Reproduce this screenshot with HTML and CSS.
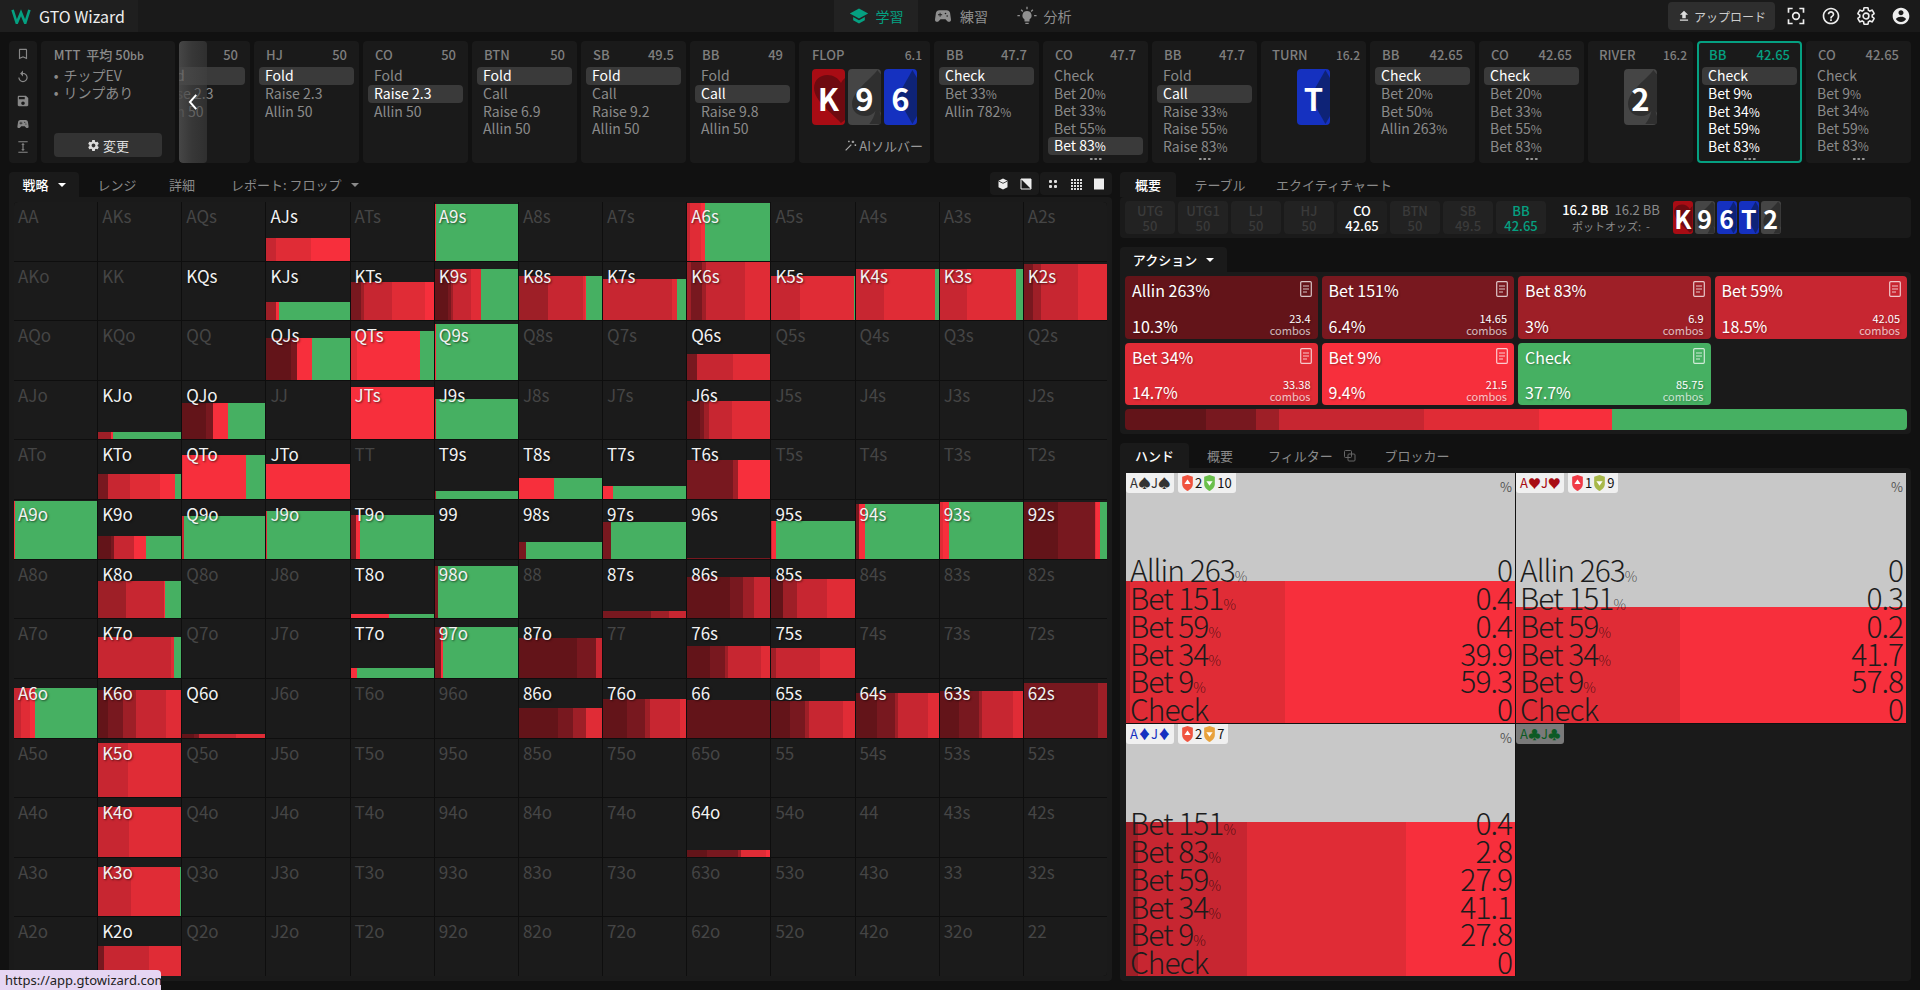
FILE: index.html
```html
<!DOCTYPE html>
<html lang="ja">
<head>
<meta charset="utf-8">
<title>GTO Wizard</title>
<link rel="stylesheet" href="styles.css">
</head>
<body>
<svg class="sprite" aria-hidden="true">
  <symbol id="heart" viewBox="0 0 33 56" preserveAspectRatio="none"><path d="M28.5 54C20 44 2 32 2 19 2 11 8 6 15 6c6 0 11 3 13.500 8C31 9 36 6 42 6l18 24z"/></symbol>
  <symbol id="spade" viewBox="0 0 33 56" preserveAspectRatio="none"><path d="M29 1C23 10 4 22 4 35c0 8 6 12 13 12 4 0 8-2 10-5-1 5-3 9-6 13h16c-3-4-5-8-6-13 2 3 6 5 10 5l19-7V25C50 18 35 10 29 1z"/></symbol>
  <symbol id="diamond" viewBox="0 0 33 56" preserveAspectRatio="none"><path d="M28 1l15 27-15 27-15-27z"/></symbol>
  <symbol id="doc" viewBox="0 0 12 16"><rect x=".7" y=".7" width="10.600" height="14.600" rx="1" fill="none" stroke="currentColor" stroke-width="1.200"/><path d="M3 5h6M3 8h6M3 11h4" stroke="currentColor" stroke-width="1.200"/></symbol>
  <symbol id="sup" viewBox="0 0 12 18"><path fill="currentColor" d="M6 0l6 2v8c0 4-3 6-6 8-3-2-6-4-6-8V2z"/><path fill="#fff" d="M6 5l3.500 5h-7z"/></symbol>
  <symbol id="sdown" viewBox="0 0 12 18"><path fill="currentColor" d="M6 0l6 2v8c0 4-3 6-6 8-3-2-6-4-6-8V2z"/><path fill="#fff" d="M6 12L2.500 7h7z"/></symbol>
</svg>

<header class="top">
  <div class="logo">
    <svg class="logo-w" viewBox="0 0 20 16"><path d="M1 1l4.500 14L10 4l4.500 11L19 1" fill="none" stroke="#05a081" stroke-width="2.800"/></svg>
    <span>GTO Wizard</span>
  </div>
  <nav class="nav">
    <a class="nav-i act"><svg viewBox="0 0 24 24"><path d="M12 3L1 9l11 6 11-6zM5 13.200v4L12 21l7-3.800v-4L12 17z"/></svg>学習</a>
    <a class="nav-i"><svg viewBox="0 0 24 24"><path d="M21.580 16.090l-1.090-7.660C20.210 6.460 18.520 5 16.530 5H7.470C5.480 5 3.790 6.460 3.510 8.430l-1.090 7.660C2.200 17.630 3.390 19 4.940 19c.68 0 1.320-.27 1.800-.75L9 16h6l2.250 2.250c.48.48 1.130.75 1.800.75 1.560 0 2.750-1.370 2.530-2.910zM11 11H9v2H8v-2H6v-1h2V8h1v2h2v1zm4-1c-.55 0-1-.45-1-1s.45-1 1-1 1 .45 1 1-.45 1-1 1zm2 3c-.55 0-1-.45-1-1s.45-1 1-1 1 .45 1 1-.45 1-1 1z"/></svg>練習</a>
    <a class="nav-i"><svg viewBox="0 0 24 24"><path d="M10 21.500h4v-1.500h-4zM12 6a5.500 5.500 0 0 0-3 10.100V18.500h6v-2.400A5.500 5.500 0 0 0 12 6z"/><path d="M12 1v3M3.500 11.500h-3M23.500 11.500h-3M5 4.500l2 2M19 4.500l-2 2" stroke="currentColor" stroke-width="1.600"/></svg>分析</a>
  </nav>
  <div class="top-r">
    <button class="upload"><svg viewBox="0 0 24 24"><path d="M5 20h14v-2H5v2zm0-10h4v6h6v-6h4l-7-7-7 7z"/></svg>アップロード</button>
    <svg class="ti" viewBox="0 0 24 24" fill="none" stroke="#eee" stroke-width="2"><path d="M3 8V3h5M16 3h5v5M21 16v5h-5M8 21H3v-5"/><circle cx="12" cy="12" r="4"/></svg>
    <svg class="ti" viewBox="0 0 24 24"><path fill="#eee" d="M11 18h2v-2h-2v2zm1-16C6.480 2 2 6.480 2 12s4.480 10 10 10 10-4.480 10-10S17.520 2 12 2zm0 18c-4.410 0-8-3.590-8-8s3.590-8 8-8 8 3.590 8 8-3.590 8-8 8zm0-14c-2.210 0-4 1.790-4 4h2c0-1.100.9-2 2-2s2 .9 2 2c0 2-3 1.750-3 5h2c0-2.250 3-2.500 3-5 0-2.210-1.790-4-4-4z"/></svg>
    <svg class="ti" viewBox="0 0 24 24"><path fill="none" stroke="#eee" stroke-width="1.900" d="M19.430 12.980c.04-.32.07-.64.07-.98s-.03-.66-.07-.98l2.110-1.650c.19-.15.24-.42.12-.64l-2-3.460c-.12-.22-.39-.3-.61-.22l-2.490 1c-.52-.4-1.080-.73-1.690-.98l-.38-2.650C14.460 2.180 14.250 2 14 2h-4c-.25 0-.46.18-.49.42l-.38 2.650c-.61.25-1.170.59-1.690.98l-2.490-1c-.23-.09-.49 0-.61.22l-2 3.460c-.13.22-.07.49.12.64l2.110 1.650c-.04.32-.07.65-.07.98s.03.66.07.98l-2.110 1.650c-.19.15-.24.42-.12.64l2 3.460c.12.22.39.3.61.22l2.490-1c.52.4 1.080.73 1.690.98l.38 2.650c.03.24.24.42.49.42h4c.25 0 .46-.18.49-.42l.38-2.650c.61-.25 1.170-.59 1.690-.98l2.490 1c.23.09.49 0 .61-.22l2-3.460c.12-.22.07-.49-.12-.64l-2.110-1.650zM12 15.500c-1.930 0-3.500-1.570-3.500-3.500s1.570-3.500 3.500-3.500 3.500 1.570 3.500 3.500-1.570 3.500-3.500 3.500z"/></svg>
    <svg class="ti" viewBox="0 0 24 24"><path fill="#eee" d="M12 2C6.480 2 2 6.480 2 12s4.480 10 10 10 10-4.480 10-10S17.520 2 12 2zm0 3c1.660 0 3 1.340 3 3s-1.340 3-3 3-3-1.340-3-3 1.340-3 3-3zm0 14.200c-2.500 0-4.710-1.280-6-3.220.03-1.990 4-3.080 6-3.080 1.990 0 5.970 1.090 6 3.080-1.290 1.940-3.500 3.220-6 3.220z"/></svg>
  </div>
</header>

<section class="strip">
  <div class="tools">
    <svg viewBox="0 0 24 24"><path d="M17 3H7c-1.100 0-2 .9-2 2v16l7-3 7 3V5c0-1.100-.9-2-2-2zm0 15l-5-2.180L7 18V5h10v13z"/></svg>
    <svg viewBox="0 0 24 24"><path d="M12 5V1L7 6l5 5V7c3.310 0 6 2.690 6 6s-2.690 6-6 6-6-2.690-6-6H4c0 4.420 3.580 8 8 8s8-3.580 8-8-3.580-8-8-8z"/></svg>
    <svg viewBox="0 0 24 24"><path d="M17 3H5c-1.110 0-2 .9-2 2v14c0 1.100.89 2 2 2h14c1.100 0 2-.9 2-2V7l-4-4zm-5 16c-1.660 0-3-1.340-3-3s1.340-3 3-3 3 1.340 3 3-1.340 3-3 3zm3-10H5V5h10v4z"/></svg>
    <svg viewBox="0 0 24 24"><path d="M21.580 16.090l-1.090-7.660C20.210 6.460 18.520 5 16.530 5H7.470C5.480 5 3.790 6.460 3.510 8.430l-1.090 7.660C2.200 17.630 3.390 19 4.940 19c.68 0 1.320-.27 1.800-.75L9 16h6l2.250 2.250c.48.48 1.130.75 1.800.75 1.560 0 2.750-1.370 2.530-2.910zM11 11H9v2H8v-2H6v-1h2V8h1v2h2v1zm4-1c-.55 0-1-.45-1-1s.45-1 1-1 1 .45 1 1-.45 1-1 1zm2 3c-.55 0-1-.45-1-1s.45-1 1-1 1 .45 1 1-.45 1-1 1z"/></svg>
    <svg viewBox="0 0 24 24"><path d="M4 2h16v2H4zM4 20h16v2H4zM12 5L9 8h2v8H9l3 3 3-3h-2V8h2z"/></svg>
  </div>
  <div class="mtt">
    <div class="mtt-h">MTT&nbsp; 平均 50<small>bb</small></div>
    <ul class="mtt-l"><li>チップEV</li><li>リンプあり</li></ul>
    <button class="chg"><svg viewBox="0 0 24 24"><path d="M19.430 12.980c.04-.32.07-.64.07-.98s-.03-.66-.07-.98l2.110-1.650c.19-.15.24-.42.12-.64l-2-3.460c-.12-.22-.39-.3-.61-.22l-2.490 1c-.52-.4-1.080-.73-1.690-.98l-.38-2.650C14.460 2.180 14.250 2 14 2h-4c-.25 0-.46.18-.49.42l-.38 2.650c-.61.25-1.170.59-1.690.98l-2.490-1c-.23-.09-.49 0-.61.22l-2 3.460c-.13.22-.07.49.12.64l2.110 1.650c-.04.32-.07.65-.07.98s.03.66.07.98l-2.110 1.650c-.19.15-.24.42-.12.64l2 3.460c.12.22.39.3.61.22l2.490-1c.52.4 1.080.73 1.690.98l.38 2.650c.03.24.24.42.49.42h4c.25 0 .46-.18.49-.42l.38-2.650c.61-.25 1.170-.59 1.690-.98l2.490 1c.23.09.49 0 .61-.22l2-3.460c.12-.22.07-.49-.12-.64l-2.110-1.650zM12 15.500c-1.930 0-3.500-1.570-3.500-3.500s1.570-3.500 3.500-3.500 3.500 1.570 3.500 3.500-1.570 3.500-3.500 3.500z"/></svg>変更</button>
  </div>
  <div class="node clip">
    <div class="clip-in">
      <div class="nh"><span>LJ</span><span>50</span></div>
      <div class="opt on">Fold</div><div class="opt">Raise 2.3</div><div class="opt">Allin 50</div>
    </div>
    <div class="scroller"><svg viewBox="0 0 12 20"><path d="M9 2L2 10l7 8" fill="none" stroke="#fff" stroke-width="2.200"/></svg></div>
  </div>
  <div class="node"><div class="nh"><span>HJ</span><span>50</span></div><div class="opt on">Fold</div><div class="opt">Raise 2.3</div><div class="opt">Allin 50</div></div>
  <div class="node"><div class="nh"><span>CO</span><span>50</span></div><div class="opt">Fold</div><div class="opt on">Raise 2.3</div><div class="opt">Allin 50</div></div>
  <div class="node"><div class="nh"><span>BTN</span><span>50</span></div><div class="opt on">Fold</div><div class="opt">Call</div><div class="opt">Raise 6.9</div><div class="opt">Allin 50</div></div>
  <div class="node"><div class="nh"><span>SB</span><span>49.5</span></div><div class="opt on">Fold</div><div class="opt">Call</div><div class="opt">Raise 9.2</div><div class="opt">Allin 50</div></div>
  <div class="node"><div class="nh"><span>BB</span><span>49</span></div><div class="opt">Fold</div><div class="opt on">Call</div><div class="opt">Raise 9.8</div><div class="opt">Allin 50</div></div>
  <div class="node street flop">
    <div class="nh"><span>FLOP</span><span class="pot">6.1</span></div>
    <div class="cards">
      <div class="card red"><svg><use href="#heart"/></svg><span>K</span></div>
      <div class="card gray"><svg><use href="#spade"/></svg><span>9</span></div>
      <div class="card blue"><svg><use href="#diamond"/></svg><span>6</span></div>
    </div>
    <div class="ai"><svg viewBox="0 0 16 16" fill="none" stroke="#aaa" stroke-width="1.500"><path d="M2 14L9 7M11 2v3M9.500 3.500h3M14 6.500v2M13 7.500h2M6 2v2M5 3h2"/></svg>AIソルバー</div>
  </div>
  <div class="node"><div class="nh"><span>BB</span><span>47.7</span></div><div class="opt on">Check</div><div class="opt">Bet 33<small>%</small></div><div class="opt">Allin 782<small>%</small></div></div>
  <div class="node"><div class="nh"><span>CO</span><span>47.7</span></div><div class="opt">Check</div><div class="opt">Bet 20<small>%</small></div><div class="opt">Bet 33<small>%</small></div><div class="opt">Bet 55<small>%</small></div><div class="opt on">Bet 83<small>%</small></div><div class="more"></div></div>
  <div class="node"><div class="nh"><span>BB</span><span>47.7</span></div><div class="opt">Fold</div><div class="opt on">Call</div><div class="opt">Raise 33<small>%</small></div><div class="opt">Raise 55<small>%</small></div><div class="opt">Raise 83<small>%</small></div><div class="more"></div></div>
  <div class="node street">
    <div class="nh"><span>TURN</span><span class="pot">16.2</span></div>
    <div class="cards"><div class="card blue"><svg><use href="#diamond"/></svg><span>T</span></div></div>
  </div>
  <div class="node"><div class="nh"><span>BB</span><span>42.65</span></div><div class="opt on">Check</div><div class="opt">Bet 20<small>%</small></div><div class="opt">Bet 50<small>%</small></div><div class="opt">Allin 263<small>%</small></div></div>
  <div class="node"><div class="nh"><span>CO</span><span>42.65</span></div><div class="opt on">Check</div><div class="opt">Bet 20<small>%</small></div><div class="opt">Bet 33<small>%</small></div><div class="opt">Bet 55<small>%</small></div><div class="opt">Bet 83<small>%</small></div><div class="more"></div></div>
  <div class="node street">
    <div class="nh"><span>RIVER</span><span class="pot">16.2</span></div>
    <div class="cards"><div class="card gray"><svg><use href="#spade"/></svg><span>2</span></div></div>
  </div>
  <div class="node cur"><div class="nh"><span>BB</span><span>42.65</span></div><div class="opt on">Check</div><div class="opt">Bet 9<small>%</small></div><div class="opt">Bet 34<small>%</small></div><div class="opt">Bet 59<small>%</small></div><div class="opt">Bet 83<small>%</small></div><div class="more"></div></div>
  <div class="node"><div class="nh"><span>CO</span><span>42.65</span></div><div class="opt">Check</div><div class="opt">Bet 9<small>%</small></div><div class="opt">Bet 34<small>%</small></div><div class="opt">Bet 59<small>%</small></div><div class="opt">Bet 83<small>%</small></div><div class="more"></div></div>
</section>

<main class="main">
  <section class="left">
    <div class="tabs">
      <a class="tab act w-strat">戦略<em class="caret"></em></a>
      <a class="tab w-range">レンジ</a>
      <a class="tab w-detail">詳細</a>
      <a class="tab w-report">レポート: フロップ<em class="caret"></em></a>
      <div class="gtools">
        <div class="gt"><svg viewBox="0 0 12 12"><path d="M6 .5l4.500 2.300v6.400L6 11.500 1.500 9.200V2.800z" fill="#eee"/><path d="M1.500 3L6 5.300 10.500 3" stroke="#1a1a1a" fill="none" stroke-width=".8"/></svg><svg viewBox="0 0 12 12"><path d="M1 1h10v10H1z" fill="#1a1a1a" stroke="#eee"/><path d="M1 1h10v10z" fill="#eee"/></svg></div>
        <div class="gt"><svg viewBox="0 0 12 12" fill="#ddd"><rect x="2" y="2" width="3" height="3" rx="1"/><rect x="7" y="2" width="3" height="3" rx="1"/><rect x="2" y="7" width="3" height="3" rx="1"/><rect x="7" y="7" width="3" height="3" rx="1"/></svg><svg viewBox="0 0 12 12" fill="#ddd"><path d="M1 1h2v2H1zM4 1h2v2H4zM7 1h2v2H7zM10 1h2v2h-2zM1 4h2v2H1zM4 4h2v2H4zM7 4h2v2H7zM10 4h2v2h-2zM1 7h2v2H1zM4 7h2v2H4zM7 7h2v2H7zM10 7h2v2h-2zM1 10h2v2H1zM4 10h2v2H4zM7 10h2v2H7zM10 10h2v2h-2z"/></svg><svg viewBox="0 0 12 12"><path d="M1 .5h10v11H1z" fill="#eee"/></svg></div>
      </div>
    </div>
    <div class="panel grid-wrap">
      <div class="grid">
        <div class="cl"><span>AA</span></div><div class="cl"><span>AKs</span></div><div class="cl"><span>AQs</span></div>
        <div class="cl on"><span>AJs</span><div class="bar" style="height:23px"><i class="d" style="flex:12"></i><i class="e" style="flex:41"></i><i class="f" style="flex:47"></i></div></div>
        <div class="cl"><span>ATs</span></div>
        <div class="cl on"><span>A9s</span><div class="bar" style="height:57px"><i class="f" style="flex:1"></i><i class="g" style="flex:99"></i></div></div>
        <div class="cl"><span>A8s</span></div><div class="cl"><span>A7s</span></div>
        <div class="cl on"><span>A6s</span><div class="bar" style="height:58px"><i class="d" style="flex:3"></i><i class="e" style="flex:13"></i><i class="f" style="flex:5"></i><i class="g" style="flex:79"></i></div></div>
        <div class="cl"><span>A5s</span></div><div class="cl"><span>A4s</span></div><div class="cl"><span>A3s</span></div><div class="cl"><span>A2s</span></div>

        <div class="cl"><span>AKo</span></div><div class="cl"><span>KK</span></div><div class="cl on"><span>KQs</span></div>
        <div class="cl on"><span>KJs</span><div class="bar" style="height:18px"><i class="c" style="flex:11"></i><i class="f" style="flex:4"></i><i class="g" style="flex:85"></i></div></div>
        <div class="cl on"><span>KTs</span><div class="bar" style="height:38px"><i class="b" style="flex:13"></i><i class="c" style="flex:3"></i><i class="d" style="flex:34"></i><i class="e" style="flex:39"></i><i class="f" style="flex:11"></i></div></div>
        <div class="cl on"><span>K9s</span><div class="bar" style="height:51px"><i class="a" style="flex:16"></i><i class="b" style="flex:4"></i><i class="c" style="flex:2"></i><i class="d" style="flex:22"></i><i class="e" style="flex:12"></i><i class="g" style="flex:44"></i></div></div>
        <div class="cl on"><span>K8s</span><div class="bar" style="height:44px"><i class="c" style="flex:35"></i><i class="d" style="flex:42"></i><i class="e" style="flex:2"></i><i class="f" style="flex:2"></i><i class="g" style="flex:19"></i></div></div>
        <div class="cl on"><span>K7s</span><div class="bar" style="height:41px"><i class="d" style="flex:83"></i><i class="e" style="flex:6"></i><i class="g" style="flex:11"></i></div></div>
        <div class="cl on"><span>K6s</span><div class="bar" style="height:58px"><i class="c" style="flex:4"></i><i class="b" style="flex:14"></i><i class="c" style="flex:5"></i><i class="d" style="flex:46"></i><i class="e" style="flex:31"></i></div></div>
        <div class="cl on"><span>K5s</span><div class="bar" style="height:44px"><i class="d" style="flex:35"></i><i class="e" style="flex:64"></i><i class="g" style="flex:1"></i></div></div>
        <div class="cl on"><span>K4s</span><div class="bar" style="height:51px"><i class="d" style="flex:34"></i><i class="e" style="flex:62"></i><i class="g" style="flex:4"></i></div></div>
        <div class="cl on"><span>K3s</span><div class="bar" style="height:51px"><i class="d" style="flex:33"></i><i class="e" style="flex:59"></i><i class="g" style="flex:8"></i></div></div>
        <div class="cl on"><span>K2s</span><div class="bar" style="height:56px"><i class="b" style="flex:11"></i><i class="c" style="flex:10"></i><i class="d" style="flex:44"></i><i class="e" style="flex:35"></i></div></div>

        <div class="cl"><span>AQo</span></div><div class="cl"><span>KQo</span></div><div class="cl"><span>QQ</span></div>
        <div class="cl on"><span>QJs</span><div class="bar" style="height:42px"><i class="a" style="flex:29"></i><i class="b" style="flex:8"></i><i class="f" style="flex:18"></i><i class="g" style="flex:45"></i></div></div>
        <div class="cl on"><span>QTs</span><div class="bar" style="height:49px"><i class="e" style="flex:8"></i><i class="f" style="flex:75"></i><i class="g" style="flex:17"></i></div></div>
        <div class="cl on"><span>Q9s</span><div class="bar" style="height:56px"><i class="f" style="flex:1"></i><i class="g" style="flex:99"></i></div></div>
        <div class="cl"><span>Q8s</span></div><div class="cl"><span>Q7s</span></div>
        <div class="cl on"><span>Q6s</span><div class="bar" style="height:26px"><i class="b" style="flex:12"></i><i class="d" style="flex:43"></i><i class="e" style="flex:44"></i><i class="g" style="flex:1"></i></div></div>
        <div class="cl"><span>Q5s</span></div><div class="cl"><span>Q4s</span></div><div class="cl"><span>Q3s</span></div><div class="cl"><span>Q2s</span></div>

        <div class="cl"><span>AJo</span></div>
        <div class="cl on"><span>KJo</span><div class="bar" style="height:7px"><i class="c" style="flex:15"></i><i class="f" style="flex:3"></i><i class="g" style="flex:82"></i></div></div>
        <div class="cl on"><span>QJo</span><div class="bar" style="height:36px"><i class="a" style="flex:28"></i><i class="b" style="flex:9"></i><i class="f" style="flex:18"></i><i class="g" style="flex:45"></i></div></div>
        <div class="cl"><span>JJ</span></div>
        <div class="cl on"><span>JTs</span><div class="bar" style="height:52px"><i class="f" style="flex:1"></i></div></div>
        <div class="cl on"><span>J9s</span><div class="bar" style="height:40px"><i class="d" style="flex:1"></i><i class="g" style="flex:99"></i></div></div>
        <div class="cl"><span>J8s</span></div><div class="cl"><span>J7s</span></div>
        <div class="cl on"><span>J6s</span><div class="bar" style="height:38px"><i class="a" style="flex:15"></i><i class="b" style="flex:5"></i><i class="c" style="flex:6"></i><i class="d" style="flex:28"></i><i class="e" style="flex:45"></i><i class="g" style="flex:1"></i></div></div>
        <div class="cl"><span>J5s</span></div><div class="cl"><span>J4s</span></div><div class="cl"><span>J3s</span></div><div class="cl"><span>J2s</span></div>

        <div class="cl"><span>ATo</span></div>
        <div class="cl on"><span>KTo</span><div class="bar" style="height:25px"><i class="b" style="flex:12"></i><i class="d" style="flex:26"></i><i class="e" style="flex:36"></i><i class="f" style="flex:18"></i><i class="g" style="flex:8"></i></div></div>
        <div class="cl on"><span>QTo</span><div class="bar" style="height:44px"><i class="e" style="flex:1"></i><i class="f" style="flex:76"></i><i class="g" style="flex:23"></i></div></div>
        <div class="cl on"><span>JTo</span><div class="bar" style="height:35px"><i class="f" style="flex:1"></i></div></div>
        <div class="cl"><span>TT</span></div>
        <div class="cl on"><span>T9s</span><div class="bar" style="height:8px"><i class="c" style="flex:2"></i><i class="g" style="flex:98"></i></div></div>
        <div class="cl on"><span>T8s</span><div class="bar" style="height:21px"><i class="f" style="flex:42"></i><i class="g" style="flex:58"></i></div></div>
        <div class="cl on"><span>T7s</span><div class="bar" style="height:13px"><i class="f" style="flex:12"></i><i class="g" style="flex:88"></i></div></div>
        <div class="cl on"><span>T6s</span><div class="bar" style="height:39px"><i class="b" style="flex:55"></i><i class="c" style="flex:6"></i><i class="f" style="flex:39"></i></div></div>
        <div class="cl"><span>T5s</span></div><div class="cl"><span>T4s</span></div><div class="cl"><span>T3s</span></div><div class="cl"><span>T2s</span></div>

        <div class="cl on"><span>A9o</span><div class="bar" style="height:58px"><i class="f" style="flex:1"></i><i class="g" style="flex:99"></i></div></div>
        <div class="cl on"><span>K9o</span><div class="bar" style="height:23px"><i class="a" style="flex:15"></i><i class="b" style="flex:4"></i><i class="d" style="flex:24"></i><i class="f" style="flex:14"></i><i class="g" style="flex:43"></i></div></div>
        <div class="cl on"><span>Q9o</span><div class="bar" style="height:43px"><i class="d" style="flex:2"></i><i class="g" style="flex:98"></i></div></div>
        <div class="cl on"><span>J9o</span><div class="bar" style="height:48px"><i class="e" style="flex:1"></i><i class="g" style="flex:99"></i></div></div>
        <div class="cl on"><span>T9o</span><div class="bar" style="height:44px"><i class="b" style="flex:6"></i><i class="f" style="flex:5"></i><i class="g" style="flex:89"></i></div></div>
        <div class="cl on"><span>99</span></div>
        <div class="cl on"><span>98s</span><div class="bar" style="height:17px"><i class="b" style="flex:8"></i><i class="g" style="flex:92"></i></div></div>
        <div class="cl on"><span>97s</span><div class="bar" style="height:37px"><i class="b" style="flex:9"></i><i class="f" style="flex:1"></i><i class="g" style="flex:90"></i></div></div>
        <div class="cl on"><span>96s</span><div class="bar" style="height:1px"><i class="b" style="flex:1"></i></div></div>
        <div class="cl on"><span>95s</span><div class="bar" style="height:38px"><i class="d" style="flex:1"></i><i class="f" style="flex:4"></i><i class="g" style="flex:95"></i></div></div>
        <div class="cl on"><span>94s</span><div class="bar" style="height:55px"><i class="b" style="flex:4"></i><i class="f" style="flex:7"></i><i class="g" style="flex:89"></i></div></div>
        <div class="cl on"><span>93s</span><div class="bar" style="height:57px"><i class="e" style="flex:4"></i><i class="f" style="flex:7"></i><i class="g" style="flex:89"></i></div></div>
        <div class="cl on"><span>92s</span><div class="bar" style="height:57px"><i class="a" style="flex:41"></i><i class="b" style="flex:45"></i><i class="e" style="flex:1"></i><i class="f" style="flex:4"></i><i class="g" style="flex:9"></i></div></div>

        <div class="cl"><span>A8o</span></div>
        <div class="cl on"><span>K8o</span><div class="bar" style="height:37px"><i class="c" style="flex:34"></i><i class="d" style="flex:45"></i><i class="f" style="flex:1"></i><i class="g" style="flex:20"></i></div></div>
        <div class="cl"><span>Q8o</span></div><div class="cl"><span>J8o</span></div>
        <div class="cl on"><span>T8o</span><div class="bar" style="height:4px"><i class="f" style="flex:46"></i><i class="g" style="flex:54"></i></div></div>
        <div class="cl on"><span>98o</span><div class="bar" style="height:52px"><i class="b" style="flex:4"></i><i class="g" style="flex:96"></i></div></div>
        <div class="cl"><span>88</span></div>
        <div class="cl on"><span>87s</span><div class="bar" style="height:7px"><i class="b" style="flex:58"></i><i class="c" style="flex:21"></i><i class="d" style="flex:21"></i></div></div>
        <div class="cl on"><span>86s</span><div class="bar" style="height:41px"><i class="a" style="flex:51"></i><i class="b" style="flex:16"></i><i class="c" style="flex:13"></i><i class="d" style="flex:20"></i></div></div>
        <div class="cl on"><span>85s</span><div class="bar" style="height:39px"><i class="a" style="flex:14"></i><i class="c" style="flex:17"></i><i class="d" style="flex:36"></i><i class="e" style="flex:33"></i></div></div>
        <div class="cl"><span>84s</span></div><div class="cl"><span>83s</span></div><div class="cl"><span>82s</span></div>

        <div class="cl"><span>A7o</span></div>
        <div class="cl on"><span>K7o</span><div class="bar" style="height:41px"><i class="d" style="flex:88"></i><i class="e" style="flex:3"></i><i class="g" style="flex:9"></i></div></div>
        <div class="cl"><span>Q7o</span></div><div class="cl"><span>J7o</span></div>
        <div class="cl on"><span>T7o</span><div class="bar" style="height:10px"><i class="f" style="flex:8"></i><i class="g" style="flex:92"></i></div></div>
        <div class="cl on"><span>97o</span><div class="bar" style="height:51px"><i class="b" style="flex:8"></i><i class="f" style="flex:2"></i><i class="g" style="flex:90"></i></div></div>
        <div class="cl on"><span>87o</span><div class="bar" style="height:40px"><i class="a" style="flex:70"></i><i class="b" style="flex:23"></i><i class="d" style="flex:7"></i></div></div>
        <div class="cl"><span>77</span></div>
        <div class="cl on"><span>76s</span><div class="bar" style="height:32px"><i class="a" style="flex:27"></i><i class="b" style="flex:18"></i><i class="c" style="flex:4"></i><i class="d" style="flex:40"></i><i class="e" style="flex:11"></i></div></div>
        <div class="cl on"><span>75s</span><div class="bar" style="height:30px"><i class="c" style="flex:6"></i><i class="d" style="flex:53"></i><i class="e" style="flex:41"></i></div></div>
        <div class="cl"><span>74s</span></div><div class="cl"><span>73s</span></div><div class="cl"><span>72s</span></div>

        <div class="cl on"><span>A6o</span><div class="bar" style="height:50px"><i class="d" style="flex:8"></i><i class="e" style="flex:11"></i><i class="f" style="flex:6"></i><i class="g" style="flex:75"></i></div></div>
        <div class="cl on"><span>K6o</span><div class="bar" style="height:48px"><i class="a" style="flex:12"></i><i class="b" style="flex:18"></i><i class="c" style="flex:16"></i><i class="d" style="flex:36"></i><i class="e" style="flex:18"></i></div></div>
        <div class="cl on"><span>Q6o</span><div class="bar" style="height:4px"><i class="a" style="flex:14"></i><i class="b" style="flex:6"></i><i class="d" style="flex:45"></i><i class="e" style="flex:35"></i></div></div>
        <div class="cl"><span>J6o</span></div><div class="cl"><span>T6o</span></div><div class="cl"><span>96o</span></div>
        <div class="cl on"><span>86o</span><div class="bar" style="height:30px"><i class="a" style="flex:47"></i><i class="b" style="flex:18"></i><i class="c" style="flex:16"></i><i class="e" style="flex:19"></i></div></div>
        <div class="cl on"><span>76o</span><div class="bar" style="height:39px"><i class="a" style="flex:29"></i><i class="b" style="flex:22"></i><i class="c" style="flex:5"></i><i class="d" style="flex:36"></i><i class="e" style="flex:8"></i></div></div>
        <div class="cl on"><span>66</span><div class="bar" style="height:38px"><i class="a" style="flex:1"></i></div></div>
        <div class="cl on"><span>65s</span><div class="bar" style="height:37px"><i class="a" style="flex:22"></i><i class="b" style="flex:19"></i><i class="c" style="flex:4"></i><i class="d" style="flex:41"></i><i class="e" style="flex:14"></i></div></div>
        <div class="cl on"><span>64s</span><div class="bar" style="height:45px"><i class="a" style="flex:26"></i><i class="b" style="flex:22"></i><i class="c" style="flex:3"></i><i class="d" style="flex:36"></i><i class="e" style="flex:13"></i></div></div>
        <div class="cl on"><span>63s</span><div class="bar" style="height:47px"><i class="a" style="flex:23"></i><i class="b" style="flex:24"></i><i class="c" style="flex:4"></i><i class="d" style="flex:37"></i><i class="e" style="flex:12"></i></div></div>
        <div class="cl on"><span>62s</span><div class="bar" style="height:55px"><i class="b" style="flex:89"></i><i class="c" style="flex:11"></i></div></div>

        <div class="cl"><span>A5o</span></div>
        <div class="cl on"><span>K5o</span><div class="bar" style="height:54px"><i class="d" style="flex:36"></i><i class="e" style="flex:64"></i></div></div>
        <div class="cl"><span>Q5o</span></div><div class="cl"><span>J5o</span></div><div class="cl"><span>T5o</span></div><div class="cl"><span>95o</span></div><div class="cl"><span>85o</span></div><div class="cl"><span>75o</span></div><div class="cl"><span>65o</span></div><div class="cl"><span>55</span></div><div class="cl"><span>54s</span></div><div class="cl"><span>53s</span></div><div class="cl"><span>52s</span></div>

        <div class="cl"><span>A4o</span></div>
        <div class="cl on"><span>K4o</span><div class="bar" style="height:50px"><i class="d" style="flex:37"></i><i class="e" style="flex:63"></i></div></div>
        <div class="cl"><span>Q4o</span></div><div class="cl"><span>J4o</span></div><div class="cl"><span>T4o</span></div><div class="cl"><span>94o</span></div><div class="cl"><span>84o</span></div><div class="cl"><span>74o</span></div>
        <div class="cl on"><span>64o</span><div class="bar" style="height:7px"><i class="a" style="flex:24"></i><i class="b" style="flex:37"></i><i class="c" style="flex:4"></i><i class="e" style="flex:30"></i><i class="f" style="flex:5"></i></div></div>
        <div class="cl"><span>54o</span></div><div class="cl"><span>44</span></div><div class="cl"><span>43s</span></div><div class="cl"><span>42s</span></div>

        <div class="cl"><span>A3o</span></div>
        <div class="cl on"><span>K3o</span><div class="bar" style="height:49px"><i class="d" style="flex:39"></i><i class="e" style="flex:60"></i><i class="g" style="flex:1"></i></div></div>
        <div class="cl"><span>Q3o</span></div><div class="cl"><span>J3o</span></div><div class="cl"><span>T3o</span></div><div class="cl"><span>93o</span></div><div class="cl"><span>83o</span></div><div class="cl"><span>73o</span></div><div class="cl"><span>63o</span></div><div class="cl"><span>53o</span></div><div class="cl"><span>43o</span></div><div class="cl"><span>33</span></div><div class="cl"><span>32s</span></div>

        <div class="cl"><span>A2o</span></div>
        <div class="cl on"><span>K2o</span><div class="bar" style="height:30px"><i class="b" style="flex:7"></i><i class="d" style="flex:54"></i><i class="e" style="flex:39"></i></div></div>
        <div class="cl"><span>Q2o</span></div><div class="cl"><span>J2o</span></div><div class="cl"><span>T2o</span></div><div class="cl"><span>92o</span></div><div class="cl"><span>82o</span></div><div class="cl"><span>72o</span></div><div class="cl"><span>62o</span></div><div class="cl"><span>52o</span></div><div class="cl"><span>42o</span></div><div class="cl"><span>32o</span></div><div class="cl"><span>22</span></div>
      </div>
    </div>
  </section>

  <section class="right">
    <div class="tabs">
      <a class="tab act w-sum">概要</a>
      <a class="tab w-table">テーブル</a>
      <a class="tab w-eq">エクイティチャート</a>
    </div>
    <div class="panel summary">
      <div class="pos"><b>UTG</b><b>50</b></div>
      <div class="pos"><b>UTG1</b><b>50</b></div>
      <div class="pos"><b>LJ</b><b>50</b></div>
      <div class="pos"><b>HJ</b><b>50</b></div>
      <div class="pos live"><b>CO</b><b>42.65</b></div>
      <div class="pos"><b>BTN</b><b>50</b></div>
      <div class="pos"><b>SB</b><b>49.5</b></div>
      <div class="pos teal"><b>BB</b><b>42.65</b></div>
      <div class="pot-box">
        <div class="pot-t"><b>16.2 BB</b><span>16.2 BB</span></div>
        <div class="pot-o">ポットオッズ: &nbsp;-</div>
      </div>
      <div class="mini">
        <div class="card red"><svg><use href="#heart"/></svg><span>K</span></div>
        <div class="card gray"><svg><use href="#spade"/></svg><span>9</span></div>
        <div class="card blue"><svg><use href="#diamond"/></svg><span>6</span></div>
        <div class="card blue"><svg><use href="#diamond"/></svg><span>T</span></div>
        <div class="card gray"><svg><use href="#spade"/></svg><span>2</span></div>
      </div>
    </div>

    <div class="tabs t2">
      <a class="tab act w-act">アクション<em class="caret"></em></a>
    </div>
    <div class="panel actions">
      <div class="acards">
        <div class="ac a"><div class="ac-t">Allin 263%<svg class="dc"><use href="#doc"/></svg></div><div class="ac-b"><span class="ac-p">10.3%</span><span class="ac-c">23.4<small>combos</small></span></div></div>
        <div class="ac b"><div class="ac-t">Bet 151%<svg class="dc"><use href="#doc"/></svg></div><div class="ac-b"><span class="ac-p">6.4%</span><span class="ac-c">14.65<small>combos</small></span></div></div>
        <div class="ac c"><div class="ac-t">Bet 83%<svg class="dc"><use href="#doc"/></svg></div><div class="ac-b"><span class="ac-p">3%</span><span class="ac-c">6.9<small>combos</small></span></div></div>
        <div class="ac d"><div class="ac-t">Bet 59%<svg class="dc"><use href="#doc"/></svg></div><div class="ac-b"><span class="ac-p">18.5%</span><span class="ac-c">42.05<small>combos</small></span></div></div>
        <div class="ac e"><div class="ac-t">Bet 34%<svg class="dc"><use href="#doc"/></svg></div><div class="ac-b"><span class="ac-p">14.7%</span><span class="ac-c">33.38<small>combos</small></span></div></div>
        <div class="ac f"><div class="ac-t">Bet 9%<svg class="dc"><use href="#doc"/></svg></div><div class="ac-b"><span class="ac-p">9.4%</span><span class="ac-c">21.5<small>combos</small></span></div></div>
        <div class="ac g"><div class="ac-t">Check<svg class="dc"><use href="#doc"/></svg></div><div class="ac-b"><span class="ac-p">37.7%</span><span class="ac-c">85.75<small>combos</small></span></div></div>
      </div>
      <div class="sumbar"><i class="a" style="flex:10.3"></i><i class="b" style="flex:6.4"></i><i class="c" style="flex:3"></i><i class="d" style="flex:18.5"></i><i class="e" style="flex:14.7"></i><i class="f" style="flex:9.4"></i><i class="g" style="flex:37.7"></i></div>
    </div>

    <div class="tabs t2">
      <a class="tab act w-hand">ハンド</a>
      <a class="tab w-ov">概要</a>
      <a class="tab w-fil">フィルター<svg class="cp" viewBox="0 0 12 12" fill="none" stroke="#666"><rect x=".5" y=".5" width="7" height="7" rx="1"/><rect x="4" y="4" width="7" height="7" rx="1"/></svg></a>
      <a class="tab w-blk">ブロッカー</a>
    </div>
    <div class="panel hands">
      <div class="hgrid">
        <div class="hand">
          <div class="bar fill" style="height:142px"><i class="d" style="flex:1"></i><i class="e" style="flex:40"></i><i class="f" style="flex:59"></i></div>
          <div class="hhead"><span class="chip sp">A♠J♠</span><span class="chip"><svg class="sh r"><use href="#sup"/></svg>2<svg class="sh gr"><use href="#sdown"/></svg>10</span><em>%</em></div>
          <div class="rows">
            <div class="row"><span>Allin 263<small>%</small></span><span>0</span></div>
            <div class="row"><span>Bet 151<small>%</small></span><span>0.4</span></div>
            <div class="row"><span>Bet 59<small>%</small></span><span>0.4</span></div>
            <div class="row"><span>Bet 34<small>%</small></span><span>39.9</span></div>
            <div class="row"><span>Bet 9<small>%</small></span><span>59.3</span></div>
            <div class="row"><span>Check</span><span>0</span></div>
          </div>
        </div>
        <div class="hand">
          <div class="bar fill" style="height:116px"><i class="e" style="flex:42"></i><i class="f" style="flex:58"></i></div>
          <div class="hhead"><span class="chip ht">A♥J♥</span><span class="chip"><svg class="sh r2"><use href="#sup"/></svg>1<svg class="sh ol"><use href="#sdown"/></svg>9</span><em>%</em></div>
          <div class="rows">
            <div class="row"><span>Allin 263<small>%</small></span><span>0</span></div>
            <div class="row"><span>Bet 151<small>%</small></span><span>0.3</span></div>
            <div class="row"><span>Bet 59<small>%</small></span><span>0.2</span></div>
            <div class="row"><span>Bet 34<small>%</small></span><span>41.7</span></div>
            <div class="row"><span>Bet 9<small>%</small></span><span>57.8</span></div>
            <div class="row"><span>Check</span><span>0</span></div>
          </div>
        </div>
        <div class="hand">
          <div class="bar fill" style="height:154px"><i class="c" style="flex:3"></i><i class="d" style="flex:28"></i><i class="e" style="flex:41"></i><i class="f" style="flex:28"></i></div>
          <div class="hhead"><span class="chip dm">A♦J♦</span><span class="chip"><svg class="sh r"><use href="#sup"/></svg>2<svg class="sh or"><use href="#sdown"/></svg>7</span><em>%</em></div>
          <div class="rows">
            <div class="row"><span>Bet 151<small>%</small></span><span>0.4</span></div>
            <div class="row"><span>Bet 83<small>%</small></span><span>2.8</span></div>
            <div class="row"><span>Bet 59<small>%</small></span><span>27.9</span></div>
            <div class="row"><span>Bet 34<small>%</small></span><span>41.1</span></div>
            <div class="row"><span>Bet 9<small>%</small></span><span>27.8</span></div>
            <div class="row"><span>Check</span><span>0</span></div>
          </div>
        </div>
        <div class="hand off">
          <div class="hhead"><span class="chip cb">A♣J♣</span></div>
        </div>
      </div>
    </div>
  </section>
</main>
<div class="status">https://app.gtowizard.com</div>
</body>
</html>
```

FILE: styles.css
```css
* { box-sizing: border-box; }
html, body { margin: 0; height: 990px; overflow: hidden; }
body { background: #111; color: #fff; font-family: "Noto Sans CJK JP", "Noto Sans", sans-serif; font-size: 13px; position: relative; }
.sprite { display: none; }

.top { height: 32px; background: #1a1a1a; display: flex; align-items: stretch; position: relative; }
.logo { width: 138px; background: #1f1f1f; display: flex; align-items: center; gap: 8px; padding-left: 11px; font-size: 16px; font-weight: 400; color: #eee; }
.logo-w { width: 20px; height: 15px; }
.nav { position: absolute; left: 834px; top: 0; height: 32px; display: flex; }
.nav-i { display: flex; align-items: center; justify-content: center; font-size: 14px; gap: 7px; color: #8f8f8f; height: 32px; width: 84px; white-space: nowrap; }
.nav-i:nth-child(2) { width: 85px; }
.nav-i:nth-child(3) { width: 82px; }
.nav-i svg { width: 20px; height: 20px; fill: currentColor; flex: none; }
.nav-i.act { background: #222; color: #05a081; }
.top-r { margin-left: auto; display: flex; align-items: center; padding-right: 9px; }
.upload { width: 107px; height: 28px; border: 0; border-radius: 4px; background: #2e2e2e; color: #ccc; font: inherit; font-size: 12px; display: flex; align-items: center; justify-content: center; gap: 3px; margin-right: 11px; white-space: nowrap; }
.upload svg { width: 14px; height: 14px; fill: #ddd; }
.ti { width: 20px; height: 20px; margin-right: 15px; }
.ti:last-child { margin-right: 0; }

.strip { display: flex; gap: 4px; padding: 0 9px; margin-top: 9px; height: 122px; }
.tools { width: 28px; background: #1a1a1a; border-radius: 4px; display: flex; flex-direction: column; align-items: center; justify-content: space-between; padding: 6px 0 9px; }
.tools svg { width: 14px; height: 14px; fill: #888; }
.mtt { width: 135px; background: #1a1a1a; border-radius: 4px; padding: 5px 13px 6px; display: flex; flex-direction: column; color: #8a8a8a; }
.mtt-h { height: 18px; line-height: 18px; font-weight: 500; }
.mtt-h small { font-size: 11px; }
.mtt-l { margin: 3px 0 0; padding: 0; list-style: none; font-size: 14px; line-height: 17px; }
.mtt-l li::before { content: "•"; margin-right: 5px; font-size: 14px; }
.chg { margin-top: auto; height: 24px; border: 0; border-radius: 4px; background: #333; color: #ddd; font: inherit; font-size: 13px; display: flex; align-items: center; justify-content: center; gap: 3px; }
.chg svg { width: 13px; height: 13px; fill: #ddd; }

.node { width: 105px; flex: none; background: #1a1a1a; border-radius: 4px; padding: 5px 5px 0; position: relative; color: #8a8a8a; font-size: 14px; }
.nh { display: flex; justify-content: space-between; height: 21px; line-height: 18px; font-size: 13px; font-weight: 500; padding: 0 7px; color: #7f7f7f; }
.opt { height: 17.600px; line-height: 17.600px; padding-left: 6px; white-space: nowrap; }
.opt.on { height: 18px; background: #3a3a3a; border-radius: 4px; color: #fff; }
.opt small { font-size: 12px; }
.more { width: 13px; height: 2px; margin: 3px auto 0; background: radial-gradient(circle, #999 1px, transparent 1.200px) 0 0 / 4.500px 2px repeat-x; }

.clip { width: 71px; overflow: hidden; padding: 0; }
.clip-in { position: absolute; right: 0; top: 0; width: 105px; padding: 5px; }
.scroller { position: absolute; left: 0; top: 0; width: 28px; height: 122px; background: linear-gradient(90deg, rgba(74,74,74,.92), rgba(74,74,74,.62) 45%, rgba(64,64,64,.55)); border-radius: 4px; display: flex; align-items: center; justify-content: center; }
.scroller svg { width: 11px; height: 18px; }

.street .nh { padding: 0 1px 0 6px; }
.street.flop { width: 131px; padding: 5px 7px 0; }
.pot { font-size: 12px; font-weight: 500; }
.cards { display: flex; gap: 2px; justify-content: center; margin-top: 2px; }
.flop .cards { gap: 2.500px; }
.card { width: 33.500px; height: 56px; border-radius: 4px; position: relative; overflow: hidden; display: flex; align-items: center; justify-content: center; font-size: 31px; font-weight: 700; color: #fff; }
.card svg { position: absolute; inset: 0; width: 100%; height: 100%; }
.card span { position: relative; }
.card.red { background: #a80c14; fill: #6e0a10; }
.card.gray { background: #454545; fill: #2f2f2f; }
.card.blue { background: #1531c0; fill: #0e2377; }
.ai { display: flex; align-items: center; justify-content: flex-end; gap: 2px; height: 18px; margin-top: 11px; color: #999; font-size: 13px; white-space: nowrap; }
.ai svg { width: 13px; height: 13px; }

.node.cur { border: 2px solid #05a081; padding: 3px 3px 0; color: #fff; }
.node.cur .nh { color: #05a081; }

.main { display: flex; gap: 8px; padding: 0 9px; margin-top: 9px; }
.left { width: 1103px; }
.right { width: 791px; }
.tabs { height: 25px; display: flex; align-items: stretch; font-size: 13px; color: #8a8a8a; }
.t2 { margin-top: 9px; }
.tab { display: flex; align-items: center; justify-content: center; border-radius: 4px 4px 0 0; white-space: nowrap; flex: none; }
.tab.act { background: #1a1a1a; color: #fff; font-weight: 500; }
.w-strat { width: 70px; }
.w-range { width: 36px; margin-left: 20px; }
.w-detail { width: 24px; margin-left: 35px; }
.w-report { width: 118px; margin-left: 37px; justify-content: flex-start; }
.w-sum { width: 56px; }
.w-table { width: 48px; margin-left: 20px; }
.w-eq { width: 108px; margin-left: 36px; }
.w-act { width: 107px; }
.w-hand { width: 69px; }
.w-ov { width: 24px; margin-left: 19px; }
.w-fil { width: 88px; margin-left: 36px; justify-content: flex-start; }
.w-blk { width: 60px; margin-left: 31px; }
.cp { width: 12px; height: 12px; margin-left: 11px; }
.caret { width: 0; height: 0; border: 4px solid transparent; border-top: 4px solid currentColor; border-bottom: 0; margin-left: 9px; margin-top: 1px; }
.gtools { margin-left: auto; display: flex; gap: 1px; height: 23px; }
.gt { background: #1a1a1a; border-radius: 4px; display: flex; align-items: center; justify-content: space-around; padding: 0 7px; gap: 11px; }
.gt svg { width: 12px; height: 12px; }

.panel { background: #1a1a1a; border-radius: 0 4px 4px 4px; }
.grid-wrap { height: 784px; padding: 5px; }
.grid { display: grid; grid-template-columns: repeat(13, 1fr); grid-template-rows: repeat(13, 1fr); gap: 1px; height: 774px; background: #0e0e0e; border-radius: 4px; overflow: hidden; }
.cl { background: #1b1b1b; position: relative; color: #454545; font-size: 17px; line-height: 27px; padding-left: 4px; overflow: hidden; }
.cl span { position: relative; z-index: 1; }
.cl.on { color: #f2f2f2; text-shadow: 1px 1px 2px rgba(0,0,0,.55); }
.bar { position: absolute; left: 0; right: 0; bottom: 0; display: flex; }
.bar i, .sumbar i { display: block; }
i.a, .ac.a { background: #631419; }
i.b, .ac.b { background: #78181f; }
i.c, .ac.c { background: #9e1f27; }
i.d, .ac.d { background: #c72631; }
i.e, .ac.e { background: #e02c36; }
i.f, .ac.f { background: #f72f3c; }
i.g, .ac.g { background: #46b062; }

.summary { height: 41px; padding: 4px 5px; display: flex; border-radius: 4px; }
.pos { width: 50px; height: 33px; margin-right: 3px; background: #222; border-radius: 4px; color: #3a3a3a; display: flex; flex-direction: column; align-items: center; justify-content: center; font-size: 13px; line-height: 15px; }
.pos b { font-weight: 500; }
.pos.live { color: #fff; background: #1f1f1f; }
.pos.teal { color: #05a081; }
.pot-box { width: 112px; margin-left: 6px; display: flex; flex-direction: column; align-items: center; }
.pot-t { display: flex; gap: 6px; font-size: 13px; line-height: 18px; color: #8a8a8a; white-space: nowrap; }
.pot-t b { color: #fff; font-weight: 500; }
.pot-o { font-size: 11px; color: #8a8a8a; line-height: 15px; white-space: nowrap; }
.mini { display: flex; gap: 2.500px; margin-left: 6px; }
.mini .card { width: 19.500px; height: 33px; font-size: 25px; border-radius: 3px; }

.actions { height: 162px; padding: 4px 4px 4px 5px; }
.acards { display: grid; grid-template-columns: repeat(4, 1fr); grid-template-rows: 63px 62px; gap: 4px; }
.ac { border-radius: 4px; padding: 2px 7px 3px; display: flex; flex-direction: column; justify-content: space-between; color: #fff; text-shadow: 1px 1px 2px rgba(0,0,0,.3); }
.ac-t { display: flex; justify-content: space-between; font-size: 16px; line-height: 24px; white-space: nowrap; }
.dc { width: 12px; height: 16px; margin-top: 3px; color: rgba(255,255,255,.75); margin-right: -1px; }
.ac-b { display: flex; justify-content: space-between; align-items: flex-end; }
.ac-p { font-size: 16px; line-height: 20px; }
.ac-c { display: flex; flex-direction: column; align-items: flex-end; font-size: 11px; line-height: 12px; }
.ac-c small { font-size: 11px; opacity: .7; }
.sumbar { height: 21px; margin-top: 4px; display: flex; border-radius: 4px; overflow: hidden; }

.hands { height: 513px; padding: 5px 5px 5px 6px; }
.hgrid { display: grid; grid-template-columns: 389px 390px; grid-template-rows: 250px 252px; gap: 1px; background: #111; height: 503px; }
.hand { background: #c8c8c8; position: relative; overflow: hidden; color: #1c1c1c; display: flex; flex-direction: column; justify-content: space-between; }
.hand.off { background: #1a1a1a; }
.hhead { position: relative; display: flex; gap: 4px; }
.hhead em { margin-left: auto; font-style: normal; font-size: 13px; color: #555; line-height: 14px; margin-top: 7px; padding-right: 3px; }
.chip { height: 20px; line-height: 20px; padding: 0 4px; background: #f0f0f0; border-radius: 0 0 3px 3px; font-size: 13px; color: #111; display: flex; align-items: center; gap: 2px; font-family: "Noto Sans CJK JP", "DejaVu Sans", sans-serif; white-space: nowrap; }
.chip.sp { color: #333; width: 48px; }
.chip.ht { color: #a80c14; width: 48px; }
.chip.dm { color: #1531c0; width: 48px; }
.chip.cb { color: #0d5a24; background: #7a7a7a; width: 48px; }
.sh { width: 11px; height: 16px; }
.r { color: #f0533f; } .r2 { color: #f03a46; } .gr { color: #6abf4b; } .ol { color: #a8b84a; } .or { color: #e8a23d; }
.rows { position: relative; }
.row { display: flex; justify-content: space-between; height: 27.800px; line-height: 27.800px; font-size: 30px; font-weight: 200; letter-spacing: -1px; padding: 0 3px 0 4px; white-space: nowrap; }
.row small { font-size: 14px; letter-spacing: 0; color: rgba(0,0,0,.6); }

.status { position: absolute; left: 0; bottom: 0; width: 161px; height: 20px; line-height: 20px; background: #e6d6f3; color: #222; font-family: "Noto Sans", sans-serif; font-size: 13px; padding-left: 5px; border-radius: 0 4px 0 0; white-space: nowrap; overflow: hidden; }
```
